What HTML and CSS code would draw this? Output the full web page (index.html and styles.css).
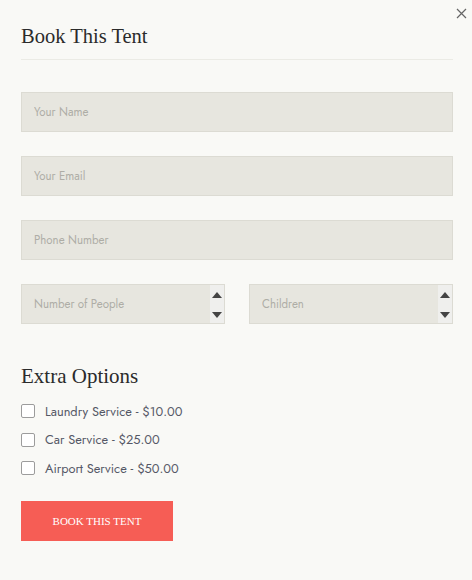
FILE: index.html
```html
<!DOCTYPE html>
<html lang="en">
<head>
  <meta charset="UTF-8" />
  <title>Book This Tent</title>
  <link rel="stylesheet" href="styles.css">
</head>
<body>
  <div class="modal">
    <button class="close" aria-label="Close">
      <svg width="11" height="11" viewBox="0 0 11 11"><path d="M1 1L10 10M10 1L1 10" stroke="#666" stroke-width="1.2" fill="none"/></svg>
    </button>
    <h2 class="title">Book This Tent</h2>

    <form class="booking">
      <input class="field" type="text" placeholder="Your Name">
      <input class="field" type="email" placeholder="Your Email">
      <input class="field" type="text" placeholder="Phone Number">

      <div class="row">
        <div class="field number">
          <input type="text" placeholder="Number of People">
          <span class="spin"><i class="up"></i><i class="down"></i></span>
        </div>
        <div class="field number">
          <input type="text" placeholder="Children">
          <span class="spin"><i class="up"></i><i class="down"></i></span>
        </div>
      </div>

      <h3 class="subtitle">Extra Options</h3>
      <label class="option"><input type="checkbox"> Laundry Service - $10.00</label>
      <label class="option"><input type="checkbox"> Car Service - $25.00</label>
      <label class="option"><input type="checkbox"> Airport Service - $50.00</label>

      <button type="button" class="submit">BOOK THIS TENT</button>
    </form>
  </div>
</body>
</html>
```

FILE: styles.css
```css
body {
  margin: 0;
  background: #f9f9f6;
  font-family: 'Jost', 'Lato', sans-serif;
  color: #555;
}

.modal {
  padding: 25px 19px 30px 21px;
}

.close {
  position: absolute;
  top: 7px;
  right: 5px;
  background: none;
  border: none;
  padding: 0;
  cursor: pointer;
}

.title {
  font-family: 'Liberation Serif', serif;
  font-weight: normal;
  font-size: 20.5px;
  color: #2b2b2b;
  margin: 0;
  padding-bottom: 11px;
  border-bottom: 1px solid #ebebe5;
}

.booking {
  display: flex;
  flex-direction: column;
  padding-top: 32px;
}

.field {
  box-sizing: border-box;
  height: 40px;
  background: #e7e6df;
  border: 1px solid #dcdbd3;
  padding: 0 12px;
  font-family: inherit;
  font-size: 11.5px;
  color: #555;
  margin-bottom: 24px;
  outline: none;
}

.field::placeholder,
.number input::placeholder {
  color: #aeada6;
}

.row {
  display: flex;
  gap: 24px;
}

.number {
  flex: 1;
  display: flex;
  padding: 0 0 0 12px;
}

.number input {
  flex: 1;
  min-width: 0;
  border: none;
  background: transparent;
  font-family: inherit;
  font-size: 11.5px;
  outline: none;
  padding: 0;
}

.spin {
  width: 14px;
  background: #efefed;
  display: flex;
  flex-direction: column;
  justify-content: space-between;
  align-items: center;
  padding: 7px 0 5px;
}

.spin i {
  width: 0;
  height: 0;
  border-left: 5px solid transparent;
  border-right: 5px solid transparent;
}

.spin .up {
  border-bottom: 6px solid #444;
}

.spin .down {
  border-top: 6px solid #444;
}

.subtitle {
  font-family: 'Liberation Serif', serif;
  font-weight: normal;
  font-size: 21px;
  color: #2b2b2b;
  margin: 16px 0 8px;
}

.option {
  display: flex;
  align-items: center;
  gap: 10px;
  font-size: 12.8px;
  color: #555866;
  height: 28.5px;
}

.option input {
  margin: 0;
  width: 14px;
  height: 14px;
  appearance: none;
  border: 1px solid #9c9c9c;
  border-radius: 2px;
  background: #fff;
}

.submit {
  margin-top: 18px;
  width: 152px;
  height: 40px;
  background: #f65d55;
  color: #fff;
  border: none;
  font-family: 'Liberation Serif', serif;
  font-size: 11px;
  cursor: pointer;
}
```
